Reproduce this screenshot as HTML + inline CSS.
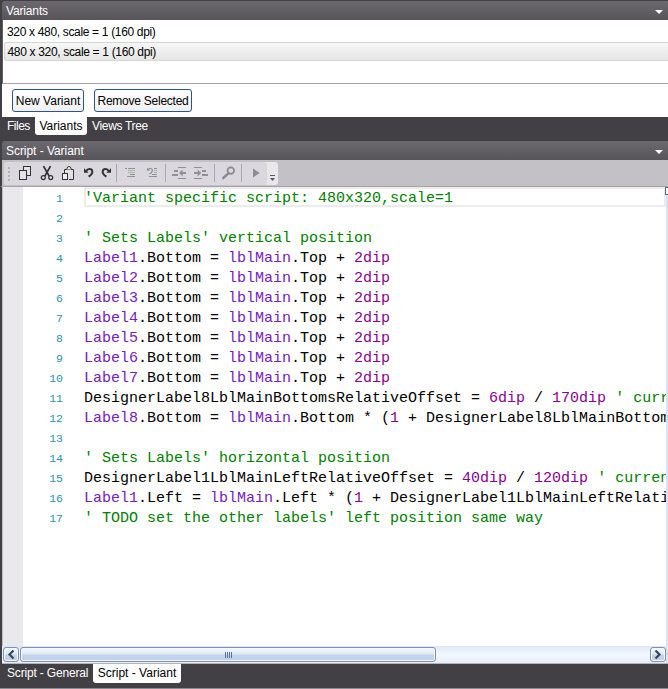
<!DOCTYPE html>
<html><head><meta charset="utf-8">
<style>
*{box-sizing:border-box;margin:0;padding:0}
html,body{width:668px;height:689px;overflow:hidden;background:#434045}
body{position:relative;font-family:"Liberation Sans",sans-serif;font-size:12px;color:#000}
.abs{position:absolute}
.title{left:2px;width:666px;height:19px;background:linear-gradient(#6b696e,#57555a);color:#fff;border-radius:3px 0 0 0}
.title span{position:absolute;left:4px;top:3px;font-size:12px;white-space:nowrap;letter-spacing:-0.15px}
.tri{position:absolute;right:5px;top:9px;width:0;height:0;border-left:4px solid transparent;border-right:4px solid transparent;border-top:4px solid #fff}
#list{left:2px;top:20px;width:666px;height:64px;background:#fff;border-bottom:1px solid #a5a5a5;border-left:1px solid #5f5d62}
.row{position:absolute;left:0;width:666px;height:20px;line-height:20px;padding-left:4px;white-space:nowrap;letter-spacing:-0.33px}
.row.sel{left:1px;width:668px;height:19px;background:linear-gradient(#f7f7f7,#e5e5e5);border:1px solid #d6d6d6;border-radius:2px}
#btns{left:2px;top:84px;width:666px;height:33px;background:#fff}
.btn{position:absolute;top:89px;height:23px;border:1px solid #2a5588;border-radius:3px;background:linear-gradient(#fff,#f0f0f0);text-align:center;line-height:23px;white-space:nowrap}
.tabbar{left:0;width:668px;background:#434045;color:#fff}
.tab{position:absolute;top:0;height:18px;line-height:19px;white-space:nowrap;text-align:center}
.tab.sel{background:#fff;color:#000;border-radius:0 0 3px 3px}
#toolbar{left:0;top:160px;width:668px;height:27px;background:#c3c1c6;border-left:2px solid #434045;border-bottom:1px solid #a6a4a9}
#tbin{position:absolute;left:2px;top:1.5px;width:274px;height:23px;background:#e9e7ec;border-radius:3px}
#tbin2{position:absolute;left:2px;top:1.5px;width:263px;height:23px;background:#dad8de;border-radius:3px}
#editor{left:0;top:187px;width:668px;height:459px;background:#fff;overflow:hidden}
#lb{position:absolute;left:0;top:0;width:2px;height:100%;background:#434045}
#gut{position:absolute;left:2px;top:0;width:21px;height:100%;background:#e9e8ec}
#re{position:absolute;left:666px;top:7px;width:2px;height:100%;background:#d6e3f8;z-index:2}
.ln{position:absolute;left:22px;width:41px;text-align:right;font-family:"Liberation Mono",monospace;font-size:11.5px;color:#2b91af;height:20px;line-height:20px;margin-top:2px}
.cl{position:absolute;left:84px;font-family:"Liberation Mono",monospace;font-size:15px;height:20px;line-height:20px;white-space:pre;color:#000;margin-top:2px}
.g{color:#008000}.p{color:#7520c0}.m{color:#8b008b}
#cur{position:absolute;left:84px;top:0;width:582px;height:20px;border:2px solid #ececec}
#hs{left:2px;top:646px;width:666px;height:17px;background:linear-gradient(#e1ebfa,#f3f7fd 50%,#e8eef9);border-top:1px solid #dce8fa}
.sb{position:absolute;top:0px;height:15px;border:1px solid #7c90b0;border-radius:3px;background:linear-gradient(#f4f8fd,#dfe9f7 45%,#c4d5ec 55%,#bccfe9);box-shadow:inset 0 0 0 1px #f6f9fd}
</style></head><body>
<div class="abs title" style="top:1px"><span>Variants</span><div class="tri"></div></div>
<div class="abs" id="list">
<div class="row" style="top:2px">320 x 480, scale = 1 (160 dpi)</div>
<div class="row sel" style="top:22px;line-height:18px;padding-left:2.5px">480 x 320, scale = 1 (160 dpi)</div>
</div>
<div class="abs" id="btns"></div>
<div class="btn" style="left:12px;width:72px">New Variant</div>
<div class="btn" style="left:94px;width:98px;letter-spacing:-0.25px">Remove Selected</div>
<div class="abs tabbar" style="top:117px;height:24px">
<div class="tab" style="left:7px;letter-spacing:-0.5px">Files</div>
<div class="tab sel" style="left:35px;width:52px">Variants</div>
<div class="tab" style="left:92px;letter-spacing:-0.33px">Views Tree</div>
</div>
<div class="abs title" style="top:141px"><span style="letter-spacing:-0.05px">Script - Variant</span><div class="tri"></div></div>
<div class="abs" id="toolbar"><div id="tbin"></div><div id="tbin2"></div>
<div class="abs" style="left:-2px;top:0;width:300px;height:27px"><svg class="abs" style="left:0;top:0" width="300" height="27" viewBox="0 0 300 27"><rect x="8" y="7" width="2" height="2" fill="#b3b0b9"/><rect x="8" y="11" width="2" height="2" fill="#b3b0b9"/><rect x="8" y="15" width="2" height="2" fill="#b3b0b9"/><rect x="8" y="19" width="2" height="2" fill="#b3b0b9"/><rect x="23.5" y="6.5" width="7" height="9" fill="#e1e0e4" stroke="#333235"/><rect x="19.5" y="10.5" width="7" height="9" fill="#e3e2e5" stroke="#333235"/><path d="M43.5 6.1 L49.2 16.1 M50.5 6.1 L44.8 16.1" stroke="#333235" stroke-width="1.8" fill="none"/><circle cx="43.3" cy="17.5" r="2" fill="none" stroke="#333235" stroke-width="1.25"/><circle cx="50.7" cy="17.5" r="2" fill="none" stroke="#333235" stroke-width="1.25"/><path d="M64.5 13.5 V9.5 H73.5 V19.5 H69" fill="#e2e1e5" stroke="#333235"/><path d="M66.6 9.5 L67.6 7 Q69 6 70.4 7 L71.4 9.5" fill="#ecebee" stroke="#333235"/><rect x="62.5" y="13.5" width="5" height="6" fill="#efeff1" stroke="#333235"/><path d="M84 8.2 V12.7 H88.7 Z" fill="#333235"/><path d="M86.3 11 C87.5 8.6 91.8 8.2 92.3 11.3 C92.6 13.6 90.6 15.4 88.6 16.6" fill="none" stroke="#333235" stroke-width="2"/><path d="M111 8.2 V12.7 H106.3 Z" fill="#333235"/><path d="M108.7 11 C107.5 8.6 103.2 8.2 102.7 11.3 C102.4 13.6 104.4 15.4 106.4 16.6" fill="none" stroke="#333235" stroke-width="2"/><rect x="116" y="4" width="1" height="18" fill="#aaa7b1"/><rect x="165" y="4" width="1" height="18" fill="#aaa7b1"/><rect x="214" y="4" width="1" height="18" fill="#aaa7b1"/><rect x="241" y="4" width="1" height="18" fill="#aaa7b1"/><rect x="125" y="8" width="2" height="1" fill="#928f98"/><rect x="128" y="8" width="7" height="1" fill="#928f98"/><rect x="128" y="10" width="7" height="1" fill="#93c493"/><rect x="128" y="12" width="7" height="1" fill="#93c493"/><rect x="130" y="14" width="5" height="1" fill="#928f98"/><rect x="127" y="16" width="8" height="1" fill="#928f98"/><rect x="154" y="8" width="3" height="1" fill="#928f98"/><rect x="154" y="10" width="3" height="1" fill="#93c493"/><rect x="154" y="12" width="3" height="1" fill="#93c493"/><rect x="152" y="14" width="5" height="1" fill="#928f98"/><rect x="149" y="16" width="8" height="1" fill="#928f98"/><path d="M147 7.8 V10.8 H150 Z" fill="#928f98"/><path d="M148.3 9.6 C150 7.6 152.6 8.4 152.4 10.6 C152.2 12.2 151 13.2 149.6 14" fill="none" stroke="#928f98" stroke-width="1.2"/><rect x="178" y="7" width="8" height="1" fill="#928f98"/><rect x="178" y="18" width="8" height="1" fill="#928f98"/><rect x="174" y="10" width="4" height="2" fill="#928f98"/><rect x="172" y="14" width="6" height="2" fill="#928f98"/><rect x="181" y="12" width="5" height="2" fill="#928f98"/><path d="M179 13 L182.6 9.6 V16.4 Z" fill="#928f98"/><rect x="194" y="7" width="8" height="1" fill="#928f98"/><rect x="194" y="18" width="8" height="1" fill="#928f98"/><rect x="202" y="10" width="4" height="2" fill="#928f98"/><rect x="202" y="14" width="6" height="2" fill="#928f98"/><rect x="194" y="12" width="5" height="2" fill="#928f98"/><path d="M201.2 13 L197.6 9.6 V16.4 Z" fill="#928f98"/><circle cx="230.8" cy="10.6" r="3.3" fill="none" stroke="#8a8890" stroke-width="1.7"/><path d="M228.3 13.3 L223.2 18.2" stroke="#8a8890" stroke-width="2.4" fill="none" stroke-linecap="round"/><path d="M253 8.5 V17.5 L259.6 13 Z" fill="#8e8c93"/><rect x="270" y="15" width="5" height="1" fill="#5b595f"/><path d="M270 18 H275 L272.5 21 Z" fill="#5b595f"/></svg></div></div>
<div class="abs" id="editor"><div id="lb"></div><div class="abs" style="left:2px;top:0;width:1px;height:100%;background:#bfbdc2;z-index:1"></div><div id="gut"></div><div id="re"></div><div class="abs" style="left:665px;top:0;width:4px;height:8px;border:1px solid #4a6896;background:#fff;z-index:3"></div><div id="cur"></div>
<div class="ln" style="top:0px">1</div>
<div class="cl" style="top:0px"><span class="g">'Variant specific script: 480x320,scale=1</span></div>
<div class="ln" style="top:20px">2</div>
<div class="ln" style="top:40px">3</div>
<div class="cl" style="top:40px"><span class="g">' Sets Labels' vertical position</span></div>
<div class="ln" style="top:60px">4</div>
<div class="cl" style="top:60px"><span class="p">Label1</span>.Bottom = <span class="p">lblMain</span>.Top + <span class="m">2dip</span></div>
<div class="ln" style="top:80px">5</div>
<div class="cl" style="top:80px"><span class="p">Label2</span>.Bottom = <span class="p">lblMain</span>.Top + <span class="m">2dip</span></div>
<div class="ln" style="top:100px">6</div>
<div class="cl" style="top:100px"><span class="p">Label3</span>.Bottom = <span class="p">lblMain</span>.Top + <span class="m">2dip</span></div>
<div class="ln" style="top:120px">7</div>
<div class="cl" style="top:120px"><span class="p">Label4</span>.Bottom = <span class="p">lblMain</span>.Top + <span class="m">2dip</span></div>
<div class="ln" style="top:140px">8</div>
<div class="cl" style="top:140px"><span class="p">Label5</span>.Bottom = <span class="p">lblMain</span>.Top + <span class="m">2dip</span></div>
<div class="ln" style="top:160px">9</div>
<div class="cl" style="top:160px"><span class="p">Label6</span>.Bottom = <span class="p">lblMain</span>.Top + <span class="m">2dip</span></div>
<div class="ln" style="top:180px">10</div>
<div class="cl" style="top:180px"><span class="p">Label7</span>.Bottom = <span class="p">lblMain</span>.Top + <span class="m">2dip</span></div>
<div class="ln" style="top:200px">11</div>
<div class="cl" style="top:200px">DesignerLabel8LblMainBottomsRelativeOffset = <span class="m">6dip</span> / <span class="m">170dip</span> <span class="g">' current offset ratio</span></div>
<div class="ln" style="top:220px">12</div>
<div class="cl" style="top:220px"><span class="p">Label8</span>.Bottom = <span class="p">lblMain</span>.Bottom * (<span class="m">1</span> + DesignerLabel8LblMainBottomsRelativeOffset)</div>
<div class="ln" style="top:240px">13</div>
<div class="ln" style="top:260px">14</div>
<div class="cl" style="top:260px"><span class="g">' Sets Labels' horizontal position</span></div>
<div class="ln" style="top:280px">15</div>
<div class="cl" style="top:280px">DesignerLabel1LblMainLeftRelativeOffset = <span class="m">40dip</span> / <span class="m">120dip</span> <span class="g">' current offset ratio</span></div>
<div class="ln" style="top:300px">16</div>
<div class="cl" style="top:300px"><span class="p">Label1</span>.Left = <span class="p">lblMain</span>.Left * (<span class="m">1</span> + DesignerLabel1LblMainLeftRelativeOffset)</div>
<div class="ln" style="top:320px">17</div>
<div class="cl" style="top:320px"><span class="g">' TODO set the other labels' left position same way</span></div>
</div>
<div class="abs" id="hs">
<div class="sb" style="left:1px;width:16px"></div>
<div class="sb" style="left:18px;width:416px"></div>
<div class="sb" style="left:648px;width:16px"></div><div class="abs" style="left:664px;top:-1px;width:2px;height:17px;background:#e2e1e5"></div>
<svg class="abs" style="left:0;top:0" width="666" height="17" viewBox="0 0 666 17">
<path d="M11.5 3.5 L7.5 7.5 L11.5 11.5" fill="none" stroke="#3b4458" stroke-width="2.2"/>
<path d="M653.5 3.5 L657.5 7.5 L653.5 11.5" fill="none" stroke="#3b4458" stroke-width="2.2"/>
<path d="M223.5 5 V11 M225.5 5 V11 M227.5 5 V11 M229.5 5 V11" stroke="#5f7196" stroke-width="1"/>
</svg>
</div>
<div class="abs tabbar" style="top:663px;height:26px;border-bottom:1px solid #8c8a90"><div class="abs" style="left:2px;top:0;width:666px;height:1px;background:#b4b3b8"></div>
<div class="tab" style="left:7px;top:1px;letter-spacing:-0.17px">Script - General</div>
<div class="tab sel" style="left:93px;top:1px;width:88px;height:19px;line-height:19px">Script - Variant</div>
</div>
</body></html>
